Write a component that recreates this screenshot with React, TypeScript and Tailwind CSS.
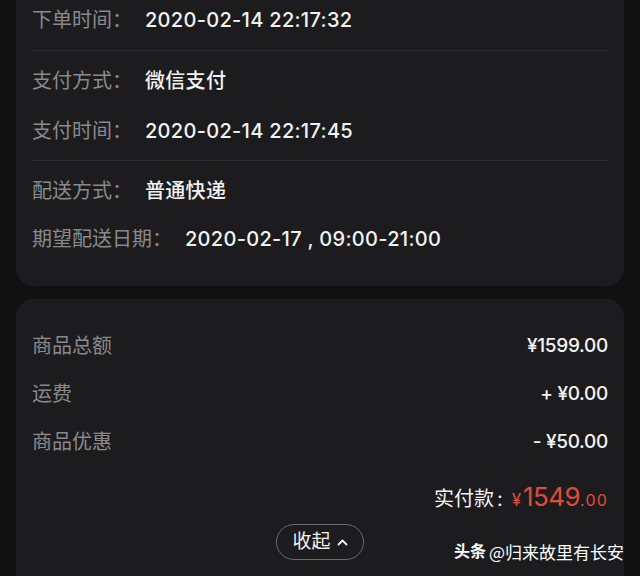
import React from "react";

const font = { fontFamily: '"Inter", "Noto Sans CJK SC", sans-serif' };

function Row({ label, value }: { label: string; value: string }) {
  return (
    <div className="flex items-center h-[40px]">
      <span className="text-[20px] text-[#8a8a8c]">{label}：</span>
      <span className="ml-[13px] text-[20px] font-medium text-[#f2f2f2] tracking-[0.3px]">{value}</span>
    </div>
  );
}

function PriceRow({ label, value }: { label: string; value: string }) {
  return (
    <div className="flex items-center justify-between h-[40px]">
      <span className="text-[20px] text-[#8a8a8c]">{label}</span>
      <span className="text-[19px] font-medium text-[#f2f2f2] tracking-[-0.3px]">{value}</span>
    </div>
  );
}

export default function App() {
  return (
    <div className="w-[640px] h-[576px] overflow-hidden bg-[#111111] px-[16px] relative" style={font}>
      <div className="bg-[#1c1c1e] rounded-b-[18px] px-[16px] pb-[27px]">
        <div className="pb-[10px] border-b border-[#2c2c2e]">
          <Row label="下单时间" value="2020-02-14 22:17:32" />
        </div>
        <div className="pt-[10px] pb-[9px] flex flex-col gap-[10px] border-b border-[#2c2c2e]">
          <Row label="支付方式" value="微信支付" />
          <Row label="支付时间" value="2020-02-14 22:17:45" />
        </div>
        <div className="pt-[10px] flex flex-col gap-[8px]">
          <Row label="配送方式" value="普通快递" />
          <Row label="期望配送日期" value="2020-02-17 , 09:00-21:00" />
        </div>
      </div>
      <div className="mt-[13px] bg-[#1c1c1e] rounded-t-[18px] px-[16px] pt-[27px] h-[300px]">
        <div className="flex flex-col gap-[8px]">
          <PriceRow label="商品总额" value="¥1599.00" />
          <PriceRow label="运费" value="+ ¥0.00" />
          <PriceRow label="商品优惠" value="- ¥50.00" />
        </div>
        <div className="mt-[17px] h-[40px] flex items-center justify-end">
          <span className="text-[20px] text-[#f2f2f2]">实付款</span>
          <span className="text-[20px] text-[#f2f2f2] ml-[3px]">:</span>
          <span className="text-[#e04b3a] flex items-baseline ml-[9px]">
            <span className="text-[17px] mr-[2px]">¥</span>
            <span className="text-[26px] leading-none tracking-[-0.6px]">1549</span>
            <span className="text-[16px] tracking-[1.2px]">.00</span>
          </span>
        </div>
        <div className="mt-[5px] flex justify-center">
          <div className="w-[88px] h-[36px] rounded-full border-[1.5px] border-[#6a6a6c] flex items-center justify-center gap-[6px]">
            <span className="text-[19px] text-[#f2f2f2]">收起</span>
            <svg width="11" height="8" viewBox="0 0 11 8" fill="none">
              <path d="M1.5 6.5 L5.5 2.5 L9.5 6.5" stroke="#f2f2f2" strokeWidth="1.8" strokeLinecap="round" strokeLinejoin="round" />
            </svg>
          </div>
        </div>
      </div>
      <div className="absolute right-[16px] bottom-[12px] flex items-center text-white">
        <span className="font-bold text-[16px]">头条</span>
        <span className="ml-[3px] text-[17px]" style={{ fontFamily: '"Noto Sans CJK SC", sans-serif' }}>@归来故里有长安</span>
      </div>
    </div>
  );
}
